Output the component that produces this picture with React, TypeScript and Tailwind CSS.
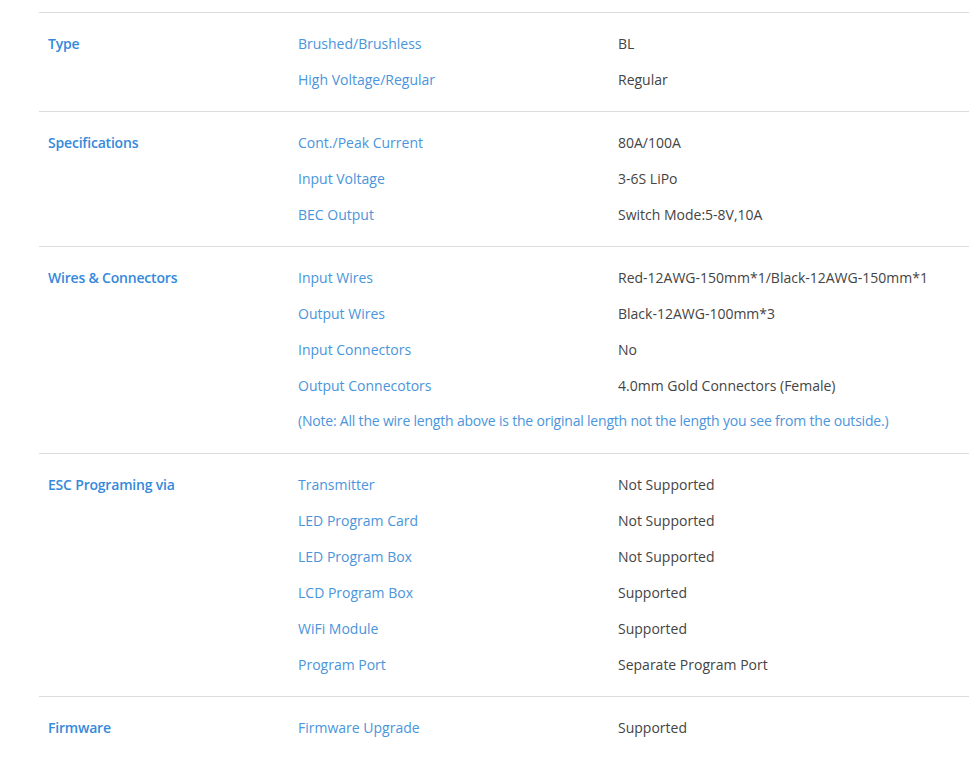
const sections: { title: string; rows: [string, string][]; note?: string }[] = [
  {
    title: 'Type',
    rows: [
      ['Brushed/Brushless', 'BL'],
      ['High Voltage/Regular', 'Regular'],
    ],
  },
  {
    title: 'Specifications',
    rows: [
      ['Cont./Peak Current', '80A/100A'],
      ['Input Voltage', '3-6S LiPo'],
      ['BEC Output', 'Switch Mode:5-8V,10A'],
    ],
  },
  {
    title: 'Wires & Connectors',
    rows: [
      ['Input Wires', 'Red-12AWG-150mm*1/Black-12AWG-150mm*1'],
      ['Output Wires', 'Black-12AWG-100mm*3'],
      ['Input Connectors', 'No'],
      ['Output Connecotors', '4.0mm Gold Connectors (Female)'],
    ],
    note: '(Note: All the wire length above is the original length not the length you see from the outside.)',
  },
  {
    title: 'ESC Programing via',
    rows: [
      ['Transmitter', 'Not Supported'],
      ['LED Program Card', 'Not Supported'],
      ['LED Program Box', 'Not Supported'],
      ['LCD Program Box', 'Supported'],
      ['WiFi Module', 'Supported'],
      ['Program Port', 'Separate Program Port'],
    ],
  },
  {
    title: 'Firmware',
    rows: [['Firmware Upgrade', 'Supported']],
  },
];

export default function App() {
  return (
    <div className="min-h-screen bg-white pt-3 pl-[39px] text-[14px] font-['Open_Sans',sans-serif]">
      {sections.map((s) => (
        <div key={s.title} className="flex border-t border-[#dcdcdc] pt-[12px] pb-[14px]">
          <div className="w-[259px] shrink-0 pl-[9px] h-9 flex items-center font-semibold text-[#3589db] tracking-[-0.2px]">
            {s.title}
          </div>
          <div className="flex-1">
            {s.rows.map(([k, v]) => (
              <div key={k} className="flex h-9 items-center">
                <div className="w-[320px] shrink-0 text-[#4a95dc]">{k}</div>
                <div className="text-[#444]">{v}</div>
              </div>
            ))}
            {s.note && <div className="h-9 flex items-center pb-[2px] text-[#4a95dc] tracking-[-0.2px]">{s.note}</div>}
          </div>
        </div>
      ))}
    </div>
  );
}
